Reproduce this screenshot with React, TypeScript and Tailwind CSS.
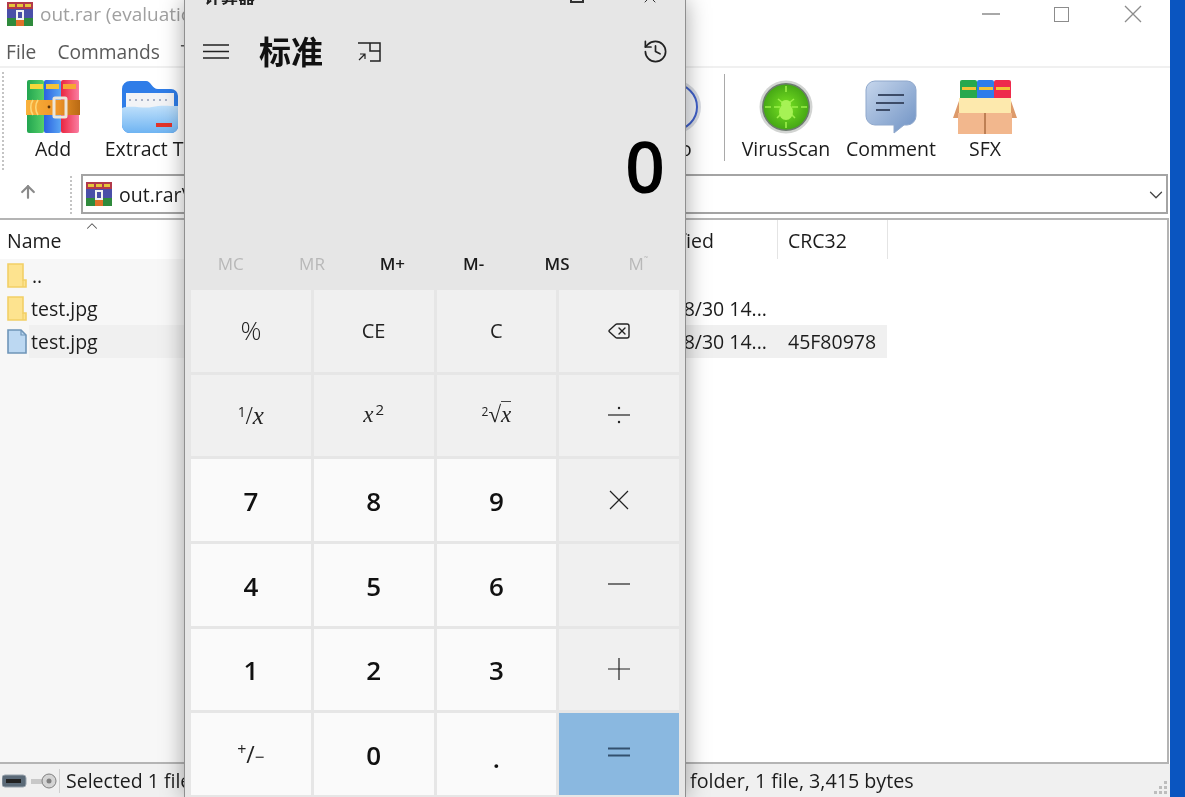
import { Delete, X, ChevronDown, ChevronUp, ArrowUp, History } from "lucide-react";
import type { ReactNode } from "react";

// WinRAR archive icon: three books with a belt
const RarIcon = ({ size = 54 }: { size?: number }) => (
  <svg width={size} height={size} viewBox="0 0 54 54">
    <defs>
      <linearGradient id="bookG" x1="0" x2="1" y1="0" y2="0">
        <stop offset="0" stopColor="#22a550" />
        <stop offset="1" stopColor="#55d068" />
      </linearGradient>
      <linearGradient id="bookB" x1="0" x2="1" y1="0" y2="0">
        <stop offset="0" stopColor="#2a62e0" />
        <stop offset="1" stopColor="#5aa6f4" />
      </linearGradient>
      <linearGradient id="bookR" x1="0" x2="1" y1="0" y2="0">
        <stop offset="0" stopColor="#ea2540" />
        <stop offset="1" stopColor="#fa7ea2" />
      </linearGradient>
      <linearGradient id="belt" x1="0" x2="1" y1="0" y2="0">
        <stop offset="0" stopColor="#f9b23c" />
        <stop offset="0.6" stopColor="#ee9428" />
        <stop offset="1" stopColor="#b96a14" />
      </linearGradient>
    </defs>
    <rect x="1" y="0" width="17" height="53" rx="2" fill="url(#bookG)" />
    <rect x="18" y="0" width="17" height="53" rx="2" fill="url(#bookB)" />
    <rect x="35" y="0" width="18" height="53" rx="2" fill="url(#bookR)" />
    <rect x="4" y="4" width="13" height="5" fill="#f4d83a" />
    <rect x="20" y="4" width="13" height="5" fill="#f2c43a" />
    <rect x="37" y="4" width="13" height="5" fill="#f6a832" />
    <rect x="0" y="20" width="54" height="15" fill="url(#belt)" />
    <path d="M7 20c-3 4-3 11 0 15M12 20c-3 4-3 11 0 15" fill="none" stroke="#fbd777" strokeWidth="1.6" />
    <rect x="28" y="18" width="12" height="19" rx="1" fill="none" stroke="#ece6da" strokeWidth="3" />
    <circle cx="23" cy="27" r="1.4" fill="#5a3208" />
  </svg>
);

const SmallRar = () => (
  <svg width="26" height="24" viewBox="0 0 26 24" className="shrink-0">
    <rect x="0" y="0" width="26" height="7" fill="#b23a4a" />
    <rect x="0" y="7" width="26" height="9" fill="#4a4fa8" />
    <rect x="0" y="16" width="9" height="8" fill="#2f8a3c" />
    <rect x="9" y="16" width="8" height="8" fill="#e0702a" />
    <rect x="17" y="16" width="9" height="8" fill="#2f8a3c" />
    <rect x="2" y="2" width="6" height="3" fill="#e6c53a" />
    <rect x="10" y="2" width="6" height="3" fill="#e6c53a" />
    <rect x="18" y="2" width="6" height="3" fill="#e6c53a" />
    <path d="M10 9h6v8h-6z" fill="none" stroke="#f2f2f2" strokeWidth="2" />
  </svg>
);

const FolderIcon = () => (
  <svg width="58" height="54" viewBox="0 0 58 54">
    <defs>
      <linearGradient id="fold" x1="0" x2="0" y1="0" y2="1">
        <stop offset="0" stopColor="#bfe0fb" />
        <stop offset="1" stopColor="#6fb4f2" />
      </linearGradient>
    </defs>
    <path d="M1 9a8 8 0 0 1 8-8h16c5 0 6 8 12 8h13a7 7 0 0 1 7 7v30a7 7 0 0 1-7 7H9a8 8 0 0 1-8-8z" fill="#2f7de8" />
    <rect x="5" y="13" width="48" height="20" fill="#f2f3f6" />
    <path d="M8 20h42" stroke="#a9b2c6" strokeWidth="2" strokeDasharray="2 4" />
    <path d="M1 28c10-3 22 1 30-1s16-1 26-1v20a7 7 0 0 1-7 7H9a8 8 0 0 1-8-8z" fill="url(#fold)" />
    <rect x="35" y="43" width="16" height="4" fill="#e2342a" />
  </svg>
);

const InfoIcon = () => (
  <svg width="56" height="56" viewBox="0 0 56 56">
    <circle cx="28" cy="28" r="27" fill="#d8dbe2" />
    <circle cx="28" cy="28" r="23" fill="#eef0f4" stroke="#3f5fc8" strokeWidth="2" />
  </svg>
);

const VirusIcon = () => (
  <svg width="54" height="54" viewBox="0 0 54 54">
    <defs>
      <radialGradient id="scan">
        <stop offset="0" stopColor="#78e322" />
        <stop offset="1" stopColor="#46a815" />
      </radialGradient>
    </defs>
    <circle cx="27" cy="27" r="26.5" fill="#d2d4d2" />
    <circle cx="27" cy="27" r="24" fill="#6c7a6e" />
    <circle cx="27" cy="27" r="22.5" fill="url(#scan)" />
    <g fill="none" stroke="#9cf04a" strokeWidth="1.6">
      <path d="M27 6v6M27 42v6M6 27h6M42 27h6" />
      <path d="M19 19l5 4M35 19l-5 4M15 27h6M39 27h-6M18 38l5-5M36 38l-5-5" />
    </g>
    <ellipse cx="27" cy="24" rx="5" ry="4" fill="#a6f255" />
    <ellipse cx="27" cy="32" rx="7" ry="8" fill="#a6f255" />
  </svg>
);

const CommentIcon = () => (
  <svg width="52" height="54" viewBox="0 0 52 54">
    <defs>
      <linearGradient id="bub" x1="0" x2="1" y1="0" y2="1">
        <stop offset="0" stopColor="#c6d6ec" />
        <stop offset="1" stopColor="#6f92c4" />
      </linearGradient>
    </defs>
    <path d="M10 1h32a9 9 0 0 1 9 9v26a9 9 0 0 1-9 9h-3l-10 8v-8H10a9 9 0 0 1-9-9V10a9 9 0 0 1 9-9z" fill="url(#bub)" stroke="#8fa8cc" />
    <path d="M13 15h26M11 23h28M11 30h14" stroke="#3d4c68" strokeWidth="2" fill="none" />
  </svg>
);

const SfxIcon = () => (
  <svg width="66" height="54" viewBox="0 0 66 54">
    <rect x="8" y="0" width="17" height="24" rx="2" fill="#27a84e" />
    <rect x="25" y="0" width="17" height="24" rx="2" fill="#2e7ceb" />
    <rect x="42" y="0" width="17" height="24" rx="2" fill="#ee2b4c" />
    <rect x="10" y="7" width="14" height="3" fill="#f2c43a" />
    <rect x="27" y="7" width="14" height="3" fill="#f2c43a" />
    <rect x="44" y="7" width="14" height="3" fill="#f2c43a" />
    <path d="M1 38L8 18v20zM65 38L58 18v20z" fill="#dd9a6a" />
    <path d="M7 18h52v14c0 2-1 3-3 3H10c-2 0-3-1-3-3z" fill="#fde9ad" />
    <rect x="6" y="33" width="54" height="21" fill="#f2b78d" />
    <path d="M33 33v21" stroke="#a8683d" strokeWidth="1.4" />
  </svg>
);

const Grip = ({ className, count }: { className: string; count: number }) => (
  <div className={`flex flex-col gap-[2px] ${className}`}>
    {Array.from({ length: count }).map((_, i) => (
      <span key={i} className="w-[2px] h-[2px] shrink-0 bg-[#c4c4c4]" />
    ))}
  </div>
);

const ToolItem = ({ w, label, icon }: { w: string; label: string; icon: ReactNode }) => (
  <div className={`${w} flex flex-col items-center shrink-0`}>
    <div className="h-[56px] flex items-center justify-center">{icon}</div>
    <span className="mt-[2px] text-[19.5px] leading-[24px] text-[#1c1c1c] whitespace-nowrap">{label}</span>
  </div>
);

const DocIcon = () => (
  <svg width="20" height="25" viewBox="0 0 20 25" className="shrink-0">
    <path d="M1 1h13l5 5v18H1z" fill="#bcd8f2" stroke="#6f95b8" strokeWidth="1.6" />
    <path d="M14 1v5h5" fill="none" stroke="#6f95b8" strokeWidth="1.2" />
  </svg>
);

const YellowNote = () => (
  <svg width="20" height="25" viewBox="0 0 20 25" className="shrink-0">
    <path d="M1 1h15v16h3v7H1z" fill="#fde38f" stroke="#f2cf66" strokeWidth="1.6" />
    <path d="M16 17v7" stroke="#f2cf66" strokeWidth="1.2" />
  </svg>
);

const WinRar = () => (
  <div className="w-[1170px] h-full bg-white flex flex-col shrink-0">
    {/* Title bar */}
    <div className="h-[28px] flex items-center pl-[7px] shrink-0">
      <SmallRar />
      <span className="ml-[7px] text-[19px] text-[#a0a0a0]">out.rar (evaluation copy)</span>
      <div className="ml-auto flex items-center">
        <span className="w-[18px] h-[1.5px] bg-[#a8a8a8] mr-[54px]" />
        <span className="w-[15px] h-[15px] border-[1.5px] border-[#8c8c8c] mr-[55px]" />
        <svg width="18" height="18" viewBox="0 0 18 18" className="mr-[28px] text-[#8c8c8c]">
          <path d="M1 1l16 16M17 1L1 17" stroke="currentColor" strokeWidth="1.3" />
        </svg>
      </div>
    </div>

    {/* Menu */}
    <div className="h-[40px] flex items-center gap-[21px] pl-[6px] pt-[11px] text-[19.2px] text-[#5a5a5a] border-b-2 border-[#f0f0f0] shrink-0">
      <span>File</span>
      <span>Commands</span>
      <span>Tools</span>
    </div>

    {/* Toolbar */}
    <div className="h-[105px] flex relative shrink-0 pt-[11px] pl-[7px]">
      <Grip className="absolute left-[2px] top-[4px]" count={25} />
      <ToolItem w="w-[92px]" label="Add" icon={<RarIcon />} />
      <ToolItem w="w-[102px]" label="Extract To" icon={<FolderIcon />} />
      <div className="w-[439px] shrink-0" />
      <ToolItem w="w-[68px]" label="Info" icon={<InfoIcon />} />
      <div className="w-px h-[87px] -mt-[5px] ml-[16px] bg-[#a9a9a9] shrink-0" />
      <div className="w-[11px] shrink-0" />
      <ToolItem w="w-[100px]" label="VirusScan" icon={<VirusIcon />} />
      <ToolItem w="w-[110px]" label="Comment" icon={<CommentIcon />} />
      <ToolItem w="w-[78px]" label="SFX" icon={<SfxIcon />} />
    </div>

    {/* Address bar */}
    <div className="h-[41px] flex items-center relative shrink-0">
      <ArrowUp size={20} strokeWidth={2.6} className="ml-[18px] -mt-[4px] text-[#8a8a8a] shrink-0" />
      <Grip className="absolute left-[70px] top-[3px] h-[38px] overflow-hidden" count={10} />
      <div className="ml-[43px] w-[1087px] h-[40px] border-2 border-[#a4a4a4] flex items-center pl-[3px] pr-0">
        <SmallRar />
        <span className="ml-[7px] text-[19.5px] text-[#1c1c1c] pt-[2px]">out.rar\</span>
        <ChevronDown size={22} strokeWidth={1.4} className="ml-auto -mr-[1px] mt-[2px] text-[#444]" />
      </div>
    </div>

    {/* File list */}
    <div className="flex-1 mt-[4px] mr-[1px] border-t-2 border-b-2 border-r-2 border-[#b4b4b4] flex flex-col min-h-0">
      <div className="h-[39px] flex text-[19.5px] text-[#1c1c1c] relative shrink-0 whitespace-nowrap">
        <ChevronUp size={18} strokeWidth={1.4} className="absolute left-[83px] -top-[3px] text-[#555]" />
        <div className="w-[620px] pl-[7px] pt-[6px] shrink-0">Name</div>
        <div className="w-[158px] pr-[63px] pt-[6px] text-right border-r border-[#e4e4e4] shrink-0">Modified</div>
        <div className="w-[110px] pl-[10px] pt-[6px] border-r border-[#e4e4e4] shrink-0">CRC32</div>
      </div>
      <div className="flex-1 relative text-[19.5px] text-[#1c1c1c]">
        <div className="absolute left-0 top-0 bottom-0 w-[300px] bg-[#f7f7f7]" />
        <div className="relative flex flex-col">
          <div className="h-[33px] flex items-center pl-[7px] gap-[5px]"><YellowNote /><span className="pt-[1px]">..</span></div>
          <div className="h-[33px] flex items-center pl-[7px]">
            <YellowNote />
            <span className="ml-[4px] w-[600px] shrink-0 pt-[1px]">test.jpg</span>
            <span className="w-[136px] shrink-0 text-right whitespace-nowrap pt-[1px]">2023/8/30 14...</span>
          </div>
          <div className="h-[33px] flex items-center pl-[7px]">
            <DocIcon />
            <div className="ml-[2px] w-[858px] h-full bg-[#f0f0f0] flex items-center pl-[2px]">
              <span className="w-[600px] shrink-0">test.jpg</span>
              <span className="w-[136px] shrink-0 text-right whitespace-nowrap">2023/8/30 14...</span>
              <span className="ml-[21px]">45F80978</span>
            </div>
          </div>
        </div>
      </div>
    </div>

    {/* Status bar */}
    <div className="h-[33px] bg-[#f0f0f0] flex items-center text-[19.5px] text-[#1c1c1c] relative shrink-0">
      <svg width="56" height="16" viewBox="0 0 56 16" className="ml-[2px] shrink-0">
        <rect x="0" y="2" width="24" height="12" rx="3" fill="#5b6a78" stroke="#9aa4ae" />
        <rect x="4" y="6" width="15" height="4" fill="#222" />
        <path d="M29 6h14v5H29z" fill="#c8c8c8" />
        <circle cx="47" cy="8" r="7" fill="#d4d4d4" stroke="#808080" />
        <circle cx="47" cy="8" r="2.5" fill="#808080" />
      </svg>
      <span className="w-px h-[24px] bg-[#cfcfcf] ml-[1px] shrink-0" />
      <span className="ml-[6px] w-[557px] shrink-0 whitespace-nowrap text-[19.5px]">Selected 1 file, 3,415 bytes</span>
      <span className="whitespace-nowrap text-[19.7px]">Total 1 folder, 1 file, 3,415 bytes</span>
      <div className="absolute right-[3px] bottom-[3px] grid grid-cols-3 gap-[2px]">
        {[0, 1, 2, 3, 4, 5, 6, 7, 8].map((i) => (
          <span key={i} className={`w-[3px] h-[3px] ${i === 0 || i === 1 || i === 3 ? "bg-transparent" : "bg-[#bdbdbd]"}`} />
        ))}
      </div>
    </div>
  </div>
);

const CalcButton = ({ children, kind }: { children: ReactNode; kind: "op" | "num" | "sign" | "eq" }) => {
  const tone = {
    num: "bg-[#fafafa] font-semibold text-[26px] text-[#111] pt-[3px]",
    sign: "bg-[#fafafa] text-[#222]",
    eq: "bg-[#8ab8e0] text-[#33506e]",
    op: "bg-[#f0f0f0] text-[20px] text-[#222]",
  }[kind];
  return <div className={`flex items-center justify-center ${tone}`}>{children}</div>;
};

// Thin operator glyphs of the keypad
const OpIcon = ({ children }: { children: ReactNode }) => (
  <svg width="24" height="24" viewBox="0 0 24 24" fill="none" stroke="currentColor" strokeWidth="1.2" className="-mt-[1px]">
    {children}
  </svg>
);

const Calculator = () => (
  <div className="absolute left-[184px] top-0 w-[502px] h-[797px] bg-[#e6e6e6] border-x border-[#8f8f8f] shadow-[0_0_22px_rgba(0,0,0,0.35)] flex flex-col overflow-hidden">
    {/* Cut-off title bar */}
    <div className="h-[6px] relative shrink-0">
      <span className="absolute left-[19px] -top-[16px] text-[17px] font-semibold text-[#222]">计算器</span>
      <span className="absolute left-[385px] -top-[10px] w-[14px] h-[13px] border-2 border-[#333]" />
      <X size={20} strokeWidth={1.2} className="absolute left-[455px] -top-[13px] text-[#333]" />
    </div>

    {/* Header */}
    <div className="h-[88px] flex items-center pl-[18px] pr-[16px] shrink-0 pt-[3px]">
      <svg width="26" height="15" viewBox="0 0 26 15" className="text-[#222] shrink-0">
        <path d="M0 1h26M0 7.5h26M0 14h26" stroke="currentColor" strokeWidth="1.6" />
      </svg>
      <span className="ml-[30px] text-[32px] font-bold text-[#111] leading-none">标准</span>
      <svg width="24" height="20" viewBox="0 0 24 20" className="ml-[34px] text-[#222]">
        <path d="M1 1h22v18h-10M13 1v8h10" fill="none" stroke="currentColor" strokeWidth="1.5" />
        <path d="M2 18l6-6M3 12h5v5" fill="none" stroke="currentColor" strokeWidth="1.2" />
      </svg>
      <History size={27} strokeWidth={1.5} className="ml-auto text-[#222]" />
    </div>

    {/* Display */}
    <div className="h-[144px] text-right pr-[20px] text-[70px] font-semibold leading-[145px] text-black shrink-0">0</div>

    {/* Memory row */}
    <div className="h-[52px] grid grid-cols-6 px-[6px] text-[17px] items-center shrink-0 text-center">
      <span className="text-[#b8b8b8] pr-[2px]">MC</span>
      <span className="text-[#b8b8b8] pr-[2px]">MR</span>
      <span className="font-semibold text-[#1a1a1a] pr-[4px]">M+</span>
      <span className="font-semibold text-[#1a1a1a] pr-[4px]">M-</span>
      <span className="font-semibold text-[#1a1a1a]">MS</span>
      <span className="text-[#b8b8b8]">M<sup className="text-[10px]">˜</sup></span>
    </div>

    {/* Keypad */}
    <div className="h-[505px] grid grid-cols-4 grid-rows-6 gap-[3px] px-[6px] shrink-0">
      <CalcButton kind="op"><span className="text-[26px] font-light">%</span></CalcButton>
      <CalcButton kind="op">CE</CalcButton>
      <CalcButton kind="op">C</CalcButton>
      <CalcButton kind="op"><Delete size={24} strokeWidth={1.4} /></CalcButton>
      <CalcButton kind="op"><span className="font-['Liberation_Serif',serif] text-[25px]"><sup className="text-[14px] font-['Open_Sans',sans-serif]">1</sup>/<i>x</i></span></CalcButton>
      <CalcButton kind="op"><span className="font-['Liberation_Serif',serif] text-[23px]"><i>x</i><sup className="ml-[2px] text-[15px] font-['Open_Sans',sans-serif]">2</sup></span></CalcButton>
      <CalcButton kind="op"><span className="font-['Liberation_Serif',serif] text-[23px]"><sup className="text-[12px] font-['Open_Sans',sans-serif]">2</sup>√<i className="border-t border-[#444] leading-none">x</i></span></CalcButton>
      <CalcButton kind="op">
        <OpIcon><path d="M1 12h22" /><circle cx="12" cy="5" r="1.2" fill="currentColor" stroke="none" /><circle cx="12" cy="19" r="1.2" fill="currentColor" stroke="none" /></OpIcon>
      </CalcButton>
      <CalcButton kind="num">7</CalcButton>
      <CalcButton kind="num">8</CalcButton>
      <CalcButton kind="num">9</CalcButton>
      <CalcButton kind="op"><OpIcon><path d="M3 3l18 18M21 3L3 21" /></OpIcon></CalcButton>
      <CalcButton kind="num">4</CalcButton>
      <CalcButton kind="num">5</CalcButton>
      <CalcButton kind="num">6</CalcButton>
      <CalcButton kind="op"><OpIcon><path d="M1 12h22" /></OpIcon></CalcButton>
      <CalcButton kind="num">1</CalcButton>
      <CalcButton kind="num">2</CalcButton>
      <CalcButton kind="num">3</CalcButton>
      <CalcButton kind="op"><OpIcon><path d="M1 12h22M12 1v22" /></OpIcon></CalcButton>
      <CalcButton kind="sign"><span className="text-[23px]"><sup className="text-[16px]">+</sup>/<span className="text-[17px]">−</span></span></CalcButton>
      <CalcButton kind="num">0</CalcButton>
      <CalcButton kind="num"><span className="mt-[6px]">.</span></CalcButton>
      <CalcButton kind="eq">
        <svg width="24" height="24" viewBox="0 0 24 24" className="-mt-[4px]"><path d="M1 8.5h22M1 15.5h22" stroke="currentColor" strokeWidth="1.8" /></svg>
      </CalcButton>
    </div>
  </div>
);

export default function App() {
  return (
    <div className="relative w-[1185px] h-[797px] overflow-hidden flex bg-[#0a55c0] font-['Open_Sans','Noto_Sans_CJK_SC',sans-serif] blur-[0.4px]">
      <WinRar />
      <Calculator />
    </div>
  );
}
